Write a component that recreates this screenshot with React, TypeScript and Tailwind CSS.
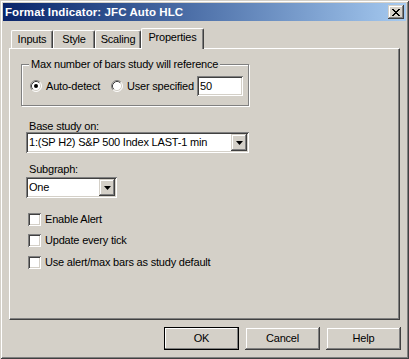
import React from "react";

const raised =
  "bg-[#D4D0C8] shadow-[inset_-1px_-1px_0_#404040,inset_1px_1px_0_#D4D0C8,inset_-2px_-2px_0_#808080,inset_2px_2px_0_#fff]";
const sunken =
  "bg-white shadow-[inset_1px_1px_0_#808080,inset_-1px_-1px_0_#fff,inset_2px_2px_0_#404040,inset_-2px_-2px_0_#D4D0C8]";

// classic 12x12 radio bullet
function Radio({ checked }: { checked?: boolean }) {
  return (
    <svg width="12" height="12" viewBox="0 0 12 12" className="shrink-0">
      <circle cx="6" cy="6" r="5" fill="#fff" />
      <path d="M2.11 9.89 A5.5 5.5 0 0 1 9.89 2.11" fill="none" stroke="#808080" />
      <path d="M9.89 2.11 A5.5 5.5 0 0 1 2.11 9.89" fill="none" stroke="#fff" />
      <path d="M2.82 9.18 A4.5 4.5 0 0 1 9.18 2.82" fill="none" stroke="#404040" />
      <path d="M9.18 2.82 A4.5 4.5 0 0 1 2.82 9.18" fill="none" stroke="#D4D0C8" />
      {checked && <circle cx="6" cy="6" r="2" fill="#000" />}
    </svg>
  );
}

function Checkbox({ label, className = "" }: { label: string; className?: string }) {
  return (
    <div className={`flex items-center h-[13px] ml-[18px] ${className}`}>
      <div className={`w-[13px] h-[13px] shrink-0 ${sunken}`} />
      <span className="ml-[4px] leading-[13px]">{label}</span>
    </div>
  );
}

function Combo({ value, w }: { value: string; w: string }) {
  return (
    <div className={`flex items-center h-[21px] ml-[16px] p-[2px] ${w} ${sunken}`}>
      <span className="flex-1 pl-[1px] leading-[17px] truncate">{value}</span>
      <div className={`w-[16px] h-[17px] flex items-center justify-center ${raised}`}>
        <svg width="7" height="4" viewBox="0 0 7 4">
          <path d="M0 0H7L3.5 4Z" fill="#000" />
        </svg>
      </div>
    </div>
  );
}

function Tab({ label, w, active }: { label: string; w: string; active?: boolean }) {
  return (
    <div
      className={`${w} ${
        active ? "h-[21px] mb-[-1px] relative z-10 pb-[3px]" : "h-[18px]"
      } flex items-center justify-center bg-[#D4D0C8] border-t border-l border-t-white border-l-white border-r border-r-[#404040] rounded-t-[2px] shadow-[inset_-1px_0_0_#808080]`}
    >
      <span className="leading-[13px]">{label}</span>
    </div>
  );
}

function Button({ label, isDefault }: { label: string; isDefault?: boolean }) {
  return (
    <div
      className={`w-[75px] h-[23px] flex items-center justify-center ${
        isDefault
          ? "bg-[#D4D0C8] border border-black shadow-[inset_-1px_-1px_0_#808080,inset_1px_1px_0_#fff]"
          : raised
      }`}
    >
      {label}
    </div>
  );
}

export default function App() {
  return (
    <div className="w-[409px] h-[359px] bg-[#D4D0C8] p-[3px] flex flex-col text-black text-[11px] tracking-[-0.2px] font-[family-name:'Liberation_Sans',Arial,sans-serif] shadow-[inset_1px_1px_0_#D4D0C8,inset_-1px_-1px_0_#404040,inset_2px_2px_0_#fff,inset_-2px_-2px_0_#808080]">
      {/* title bar */}
      <div className="h-[18px] flex items-center pl-[2px] pr-[2px] bg-linear-to-r from-[#0A246A] to-[#A6CAF0]">
        <span className="flex-1 text-white font-bold text-[11.5px] tracking-[0.1px] leading-[14px]">
          Format Indicator: JFC Auto HLC
        </span>
        <div className={`w-[16px] h-[14px] flex items-center justify-center ${raised}`}>
          <svg width="8" height="7" viewBox="0 0 8 7" shapeRendering="crispEdges">
            <path
              d="M0 0h2v1h-2zM6 0h2v1h-2zM1 1h2v1h-2zM5 1h2v1h-2zM2 2h4v1h-4zM3 3h2v1h-2zM2 4h4v1h-4zM1 5h2v1h-2zM5 5h2v1h-2zM0 6h2v1h-2zM6 6h2v1h-2z"
              fill="#000"
            />
          </svg>
        </div>
      </div>

      {/* tabs */}
      <div className="flex items-end h-[21px] mt-[6px] ml-[8px]">
        <Tab label="Inputs" w="w-[42px]" />
        <Tab label="Style" w="w-[42px]" />
        <Tab label="Scaling" w="w-[46px]" />
        <Tab label="Properties" w="w-[63px]" active />
      </div>

      {/* panel */}
      <div className="w-[391px] h-[272px] ml-[6px] flex flex-col border border-t-white border-l-white border-r-[#404040] border-b-[#404040] shadow-[inset_-1px_-1px_0_#808080]">
        <div className="relative mt-[15px] ml-[11px] w-[228px] h-[42px] border border-[#808080] shadow-[inset_1px_1px_0_#fff,1px_1px_0_#fff]">
          <span className="absolute left-[7px] top-[-8px] px-[2px] bg-[#D4D0C8] leading-[14px]">
            Max number of bars study will reference
          </span>
          <div className="flex items-center h-[20px] mt-[11px] ml-[8px]">
            <div className="w-[81px] flex items-center">
              <Radio checked />
              <span className="ml-[4px]">Auto-detect</span>
            </div>
            <div className="w-[86px] flex items-center">
              <Radio />
              <span className="ml-[4px]">User specified</span>
            </div>
            <div className={`w-[46px] h-[20px] flex items-center pl-[3px] ${sunken}`}>50</div>
          </div>
        </div>

        <div className="mt-[14px] ml-[19px] leading-[12px]">Base study on:</div>
        <Combo value="1:(SP H2) S&P 500 Index LAST-1 min" w="w-[223px]" />

        <div className="mt-[10px] ml-[19px] leading-[12px]">Subgraph:</div>
        <Combo value="One" w="w-[91px] mt-[2px]" />

        <Checkbox label="Enable Alert" className="mt-[15px]" />
        <Checkbox label="Update every tick" className="mt-[8px]" />
        <Checkbox label="Use alert/max bars as study default" className="mt-[9px]" />
      </div>

      {/* buttons */}
      <div className="flex justify-end gap-[6px] mt-[7px] pr-[5px]">
        <Button label="OK" isDefault />
        <Button label="Cancel" />
        <Button label="Help" />
      </div>
    </div>
  );
}
